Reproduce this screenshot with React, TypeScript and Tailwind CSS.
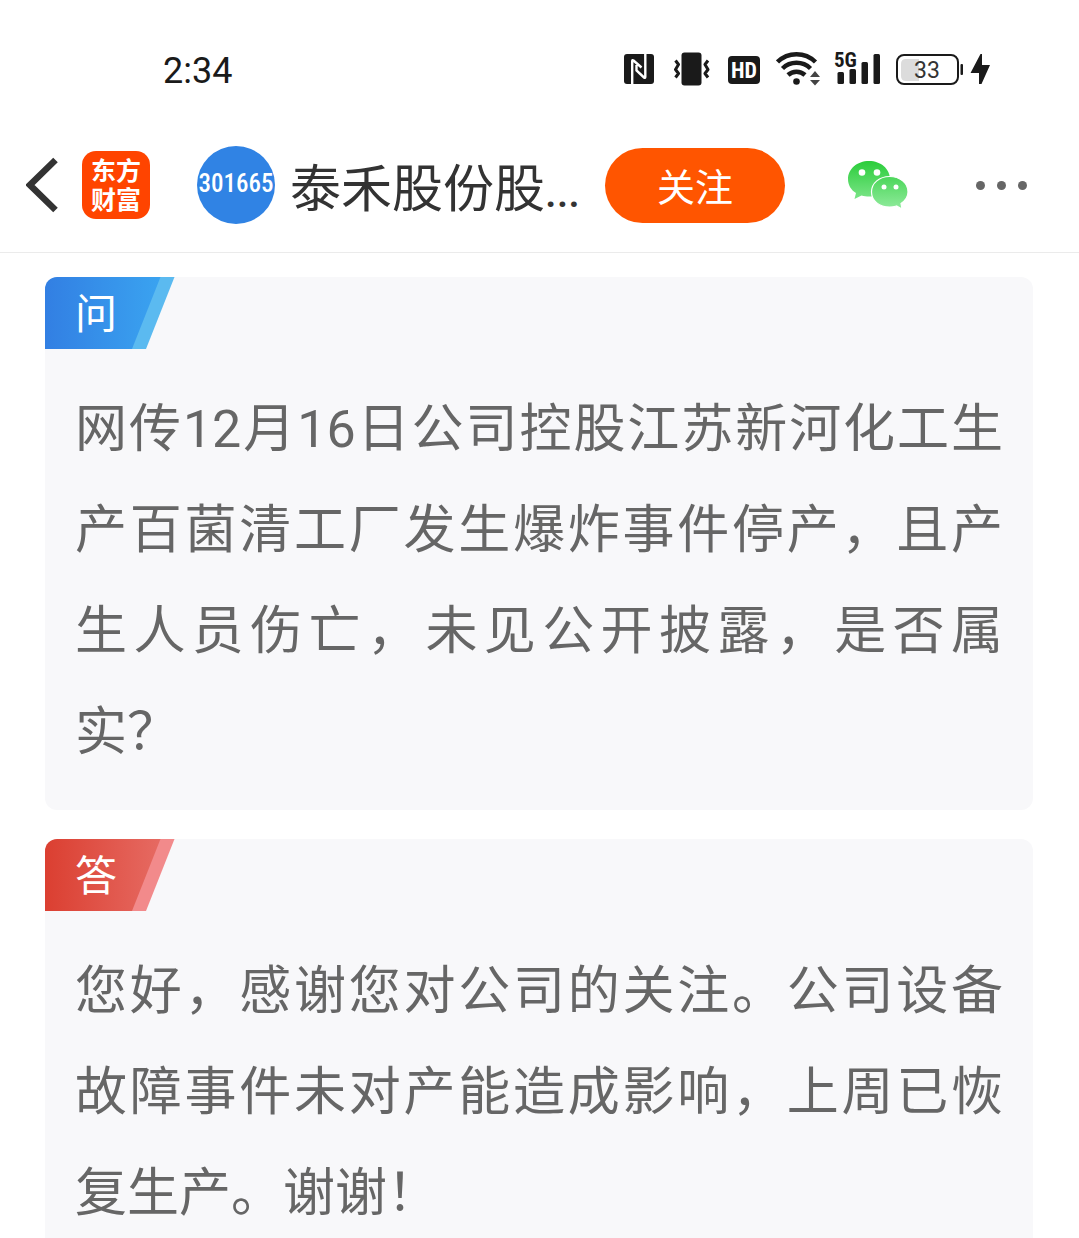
import { clsx } from "clsx";

// ── Data ──────────────────────────────────────────────────────────────────────

interface Entry {
  kind: "ask" | "reply";
  label: string;
  text: string;
}

const ENTRIES: Entry[] = [
  {
    kind: "ask",
    label: "问",
    text: "网传12月16日公司控股江苏新河化工生产百菌清工厂发生爆炸事件停产，且产生人员伤亡，未见公开披露，是否属实？",
  },
  {
    kind: "reply",
    label: "答",
    text: "您好，感谢您对公司的关注。公司设备故障事件未对产能造成影响，上周已恢复生产。谢谢！",
  },
];

const RIBBON = {
  ask: { from: "#327fe3", to: "#3aa3f0", edge: "#5bbaf0" },
  reply: { from: "#db3f31", to: "#e66a62", edge: "#f28a8b" },
};

// ── Status bar ────────────────────────────────────────────────────────────────

function StatusIcons() {
  return (
    <div className="flex items-center text-[#1a1a1a]">
      {/* NFC */}
      <svg width="30" height="30" viewBox="0 0 30 30" className="mr-5">
        <rect width="30" height="30" rx="3" fill="currentColor" />
        <path
          d="M8.200 30V7Q8.200 5.500 9.500 6.500L17.500 13.500M21.300 0V23Q21.300 24.500 20 23.500L12.500 16.500V11"
          fill="none"
          stroke="#fff"
          strokeWidth="2.400"
        />
      </svg>

      {/* Vibrate */}
      <svg width="36" height="34" viewBox="0 0 36 34" className="mr-[18px]">
        <rect x="7.500" y="0.500" width="20" height="33" rx="3" fill="currentColor" />
        <path
          d="M1.500 8L4.500 12L1.500 17L4.500 21L1.500 25M34 8L31 12L34 17L31 21L34 25"
          transform="translate(0 .5)"
          fill="none"
          stroke="currentColor"
          strokeWidth="3"
          strokeLinejoin="round"
        />
      </svg>

      {/* HD */}
      <svg width="32" height="30" viewBox="0 0 32 30" className="mr-4">
        <rect y="2" width="32" height="28" rx="4" fill="currentColor" />
        <text
          x="16"
          y="24"
          textAnchor="middle"
          fill="#fff"
          className="font-['Roboto_Condensed','Liberation_Sans_Narrow'] text-[22px] font-bold"
        >
          HD
        </text>
      </svg>

      {/* Wi-Fi */}
      <svg width="44" height="36" viewBox="0 0 44 36" className="mr-3">
        <g fill="none" stroke="currentColor" strokeWidth="4.500">
          <path d="M1.500 11A27 27 0 0 1 39.500 11" />
          <path d="M6.500 17.500A20 20 0 0 1 34.500 17.500" />
          <path d="M12 24A12.500 12.500 0 0 1 29 24" />
        </g>
        <circle cx="20.500" cy="30.500" r="3.300" fill="currentColor" />
        <path d="M39 17L45 26V29L39 36L32 29V26Z" fill="#fff" />
        <path d="M39 20L44 26H34ZM39 34.500L44 29H34Z" fill="#444" />
      </svg>

      {/* Signal */}
      <svg width="48" height="48" viewBox="0 0 48 48" className="mr-4">
        <g fill="currentColor">
          <rect x="5.500" y="27" width="6.500" height="12" rx="1.500" />
          <rect x="17.500" y="24" width="6.500" height="15" rx="1.500" />
          <rect x="29.500" y="17" width="6.500" height="22" rx="1.500" />
          <rect x="41.500" y="9" width="6.500" height="30" rx="1.500" />
        </g>
        <text
          x="2"
          y="22"
          fill="currentColor"
          stroke="#fff"
          strokeWidth="3"
          paintOrder="stroke"
          className="font-['Roboto_Condensed','Liberation_Sans_Narrow'] text-[21px] font-bold"
        >
          5G
        </text>
      </svg>

      {/* Battery */}
      <svg width="67" height="34" viewBox="0 0 67 34" className="mr-[7px]">
        <path d="M10 7H23V29H10Q5 29 5 24V12Q5 7 10 7Z" fill="#dcdcdc" />
        <rect x="1" y="3" width="61" height="29" rx="7" fill="none" stroke="currentColor" strokeWidth="2" />
        <rect x="64.500" y="12" width="2.500" height="11" rx="1" fill="currentColor" />
        <text x="31" y="26" textAnchor="middle" fill="#333" className="font-['Roboto'] text-[23px]">
          33
        </text>
      </svg>

      {/* Charging */}
      <svg width="21" height="32" viewBox="0 0 21 32">
        <path d="M10.500 1L0.500 20H9V31H11.500L20 12H12V1Z" fill="currentColor" />
      </svg>
    </div>
  );
}

function StatusBar() {
  return (
    <div className="flex h-[118px] shrink-0 items-center justify-between pt-5 pr-[88px] pl-[163px]">
      <time className="pt-1 text-[36px] leading-none text-[#1a1a1a]">2:34</time>
      <StatusIcons />
    </div>
  );
}

// ── Header ────────────────────────────────────────────────────────────────────

function WechatIcon() {
  return (
    <svg width="62" height="50" viewBox="0 0 62 50">
      <defs>
        <linearGradient id="wechat" gradientUnits="userSpaceOnUse" x1="0" y1="0" x2="0" y2="48">
          <stop offset="0" stopColor="#28cc38" />
          <stop offset="1" stopColor="#8eea9a" />
        </linearGradient>
      </defs>
      <path
        d="M22 1C10 1 1 9 1 19C1 25 4 30 9 33L7.500 39L14.500 35.500C17 36.300 19.500 36.500 22 36.500C34 36.500 43 29 43 19C43 9 34 1 22 1Z"
        fill="url(#wechat)"
      />
      <path
        d="M42.500 16.500C32.500 16.500 24.500 23 24.500 32C24.500 41 32.500 47 42.500 47C45 47 47.500 46.600 49.500 46L55 49L54 43.500C58.500 40.500 61 36.500 61 32C61 23 53 16.500 42.500 16.500Z"
        fill="url(#wechat)"
        stroke="#fff"
        strokeWidth="1.200"
      />
      <g fill="#fff">
        <circle cx="15" cy="12.500" r="3.300" />
        <circle cx="30" cy="12.500" r="3.300" />
        <circle cx="37" cy="27" r="2.500" />
        <circle cx="49" cy="27" r="2.500" />
      </g>
    </svg>
  );
}

function Header() {
  return (
    <header className="flex h-[135px] shrink-0 items-center border-b border-[#ebebeb] pr-[52px] pl-[26px]">
      <button type="button" aria-label="返回" className="mr-6">
        <svg width="32" height="56" viewBox="0 0 32 56">
          <path d="M29.500 3L4 28L29.500 53" fill="none" stroke="#333" strokeWidth="6.500" />
        </svg>
      </button>

      <a
        href="#home"
        className="mr-[47px] flex size-[68px] shrink-0 items-center justify-center rounded-[14px] bg-[#ff4400] pt-0.5 text-center text-[25px] leading-[29px] font-bold text-white"
      >
        东方
        <br />
        财富
      </a>

      <div className="mr-[15px] flex size-[78px] shrink-0 items-center justify-center rounded-full bg-[#3083e4] pb-0.5 font-['Roboto_Condensed','Liberation_Sans_Narrow',sans-serif] text-[25px] font-medium text-white">
        301665
      </div>

      <h1 className="flex items-baseline pt-2.5 text-[51px] whitespace-nowrap text-[#333]">
        泰禾股份股<span className="text-[42px] font-medium">...</span>
      </h1>

      <button
        type="button"
        className="ml-auto h-[75px] w-[180px] shrink-0 rounded-full bg-[#ff5500] pt-1.5 text-[38px] text-white"
      >
        关注
      </button>

      <button type="button" aria-label="微信分享" className="ml-[62px]">
        <WechatIcon />
      </button>

      <button type="button" aria-label="更多" className="ml-[67px] flex gap-3">
        <span className="size-[9px] rounded-full bg-[#666]" />
        <span className="size-[9px] rounded-full bg-[#666]" />
        <span className="size-[9px] rounded-full bg-[#666]" />
      </button>
    </header>
  );
}

// ── Question / answer card ────────────────────────────────────────────────────

function Ribbon({ kind, label }: { kind: Entry["kind"]; label: string }) {
  const { from, to, edge } = RIBBON[kind];

  return (
    <h2 className="relative flex h-[72px] w-[130px] items-center pt-0.5 pl-[30px] text-[42px] text-white">
      <svg className="absolute inset-0" width="130" height="72" viewBox="0 0 130 72">
        <defs>
          <linearGradient id={kind}>
            <stop offset="0" stopColor={from} />
            <stop offset="1" stopColor={to} />
          </linearGradient>
        </defs>
        <path d="M100 0H129.500L101 72H70Z" fill={edge} />
        <path d="M0 0H115.500L87 72H0Z" fill={`url(#${kind})`} />
      </svg>
      <span className="relative">{label}</span>
    </h2>
  );
}

function Card({ kind, label, text }: Entry) {
  return (
    <section className={clsx("overflow-hidden rounded-xl bg-[#f8f8fa]", kind === "ask" && "mb-[29px]")}>
      <Ribbon kind={kind} label={label} />
      <p className="px-[30px] pt-[30px] pb-[27px] text-justify text-[52px] leading-[101px] text-[#666]">{text}</p>
    </section>
  );
}

export default function App() {
  return (
    <div
      lang="zh-CN"
      className="flex h-screen flex-col overflow-hidden bg-white font-['Roboto','Noto_Sans_CJK_SC',sans-serif] font-normal"
    >
      <StatusBar />
      <Header />
      <main className="flex-1 overflow-y-auto pt-6 pr-[46px] pb-6 pl-[45px] [scrollbar-width:none]">
        {ENTRIES.map((entry) => (
          <Card key={entry.kind} {...entry} />
        ))}
      </main>
    </div>
  );
}
